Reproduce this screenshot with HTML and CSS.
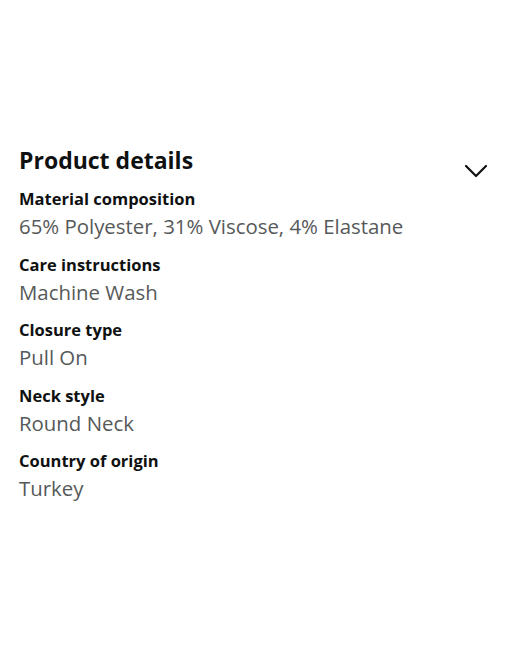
FILE: index.html
```html
<!DOCTYPE html>
<html>
<head>
<meta charset="utf-8">
<link rel="stylesheet" href="styles.css">
</head>
<body>
<section class="details">
  <div class="header">
    <h2 class="title">Product details</h2>
    <svg class="chevron" width="24" height="16" viewBox="0 0 24 16"><path d="M2 3 L12 13 L22 3" fill="none" stroke="#111" stroke-width="2.2" stroke-linecap="round" stroke-linejoin="round"/></svg>
  </div>
  <dl class="list">
    <div class="item"><dt>Material composition</dt><dd>65% Polyester, 31% Viscose, 4% Elastane</dd></div>
    <div class="item"><dt>Care instructions</dt><dd>Machine Wash</dd></div>
    <div class="item"><dt>Closure type</dt><dd>Pull On</dd></div>
    <div class="item"><dt>Neck style</dt><dd>Round Neck</dd></div>
    <div class="item"><dt>Country of origin</dt><dd>Turkey</dd></div>
  </dl>
</section>
</body>
</html>
```
FILE: styles.css
```css
html, body {
  margin: 0;
  padding: 0;
  background: #fff;
}
body {
  font-family: "Open Sans", "Noto Sans", sans-serif;
  color: #0f1111;
}
.details {
  padding: 141px 32px 0 19px;
}
.header {
  display: flex;
  justify-content: space-between;
  align-items: center;
}
.title {
  margin: 0;
  font-size: 23px;
  font-weight: 700;
  line-height: 34px;
}
.chevron {
  margin-top: 22px;
}
.list {
  margin: 8px 0 0 0;
}
.item {
  margin-bottom: 11.5px;
}
dt {
  font-size: 16.5px;
  font-weight: 700;
  line-height: 24px;
}
dd {
  margin: 0;
  font-size: 20.4px;
  line-height: 30px;
  color: #565959;
}
```
